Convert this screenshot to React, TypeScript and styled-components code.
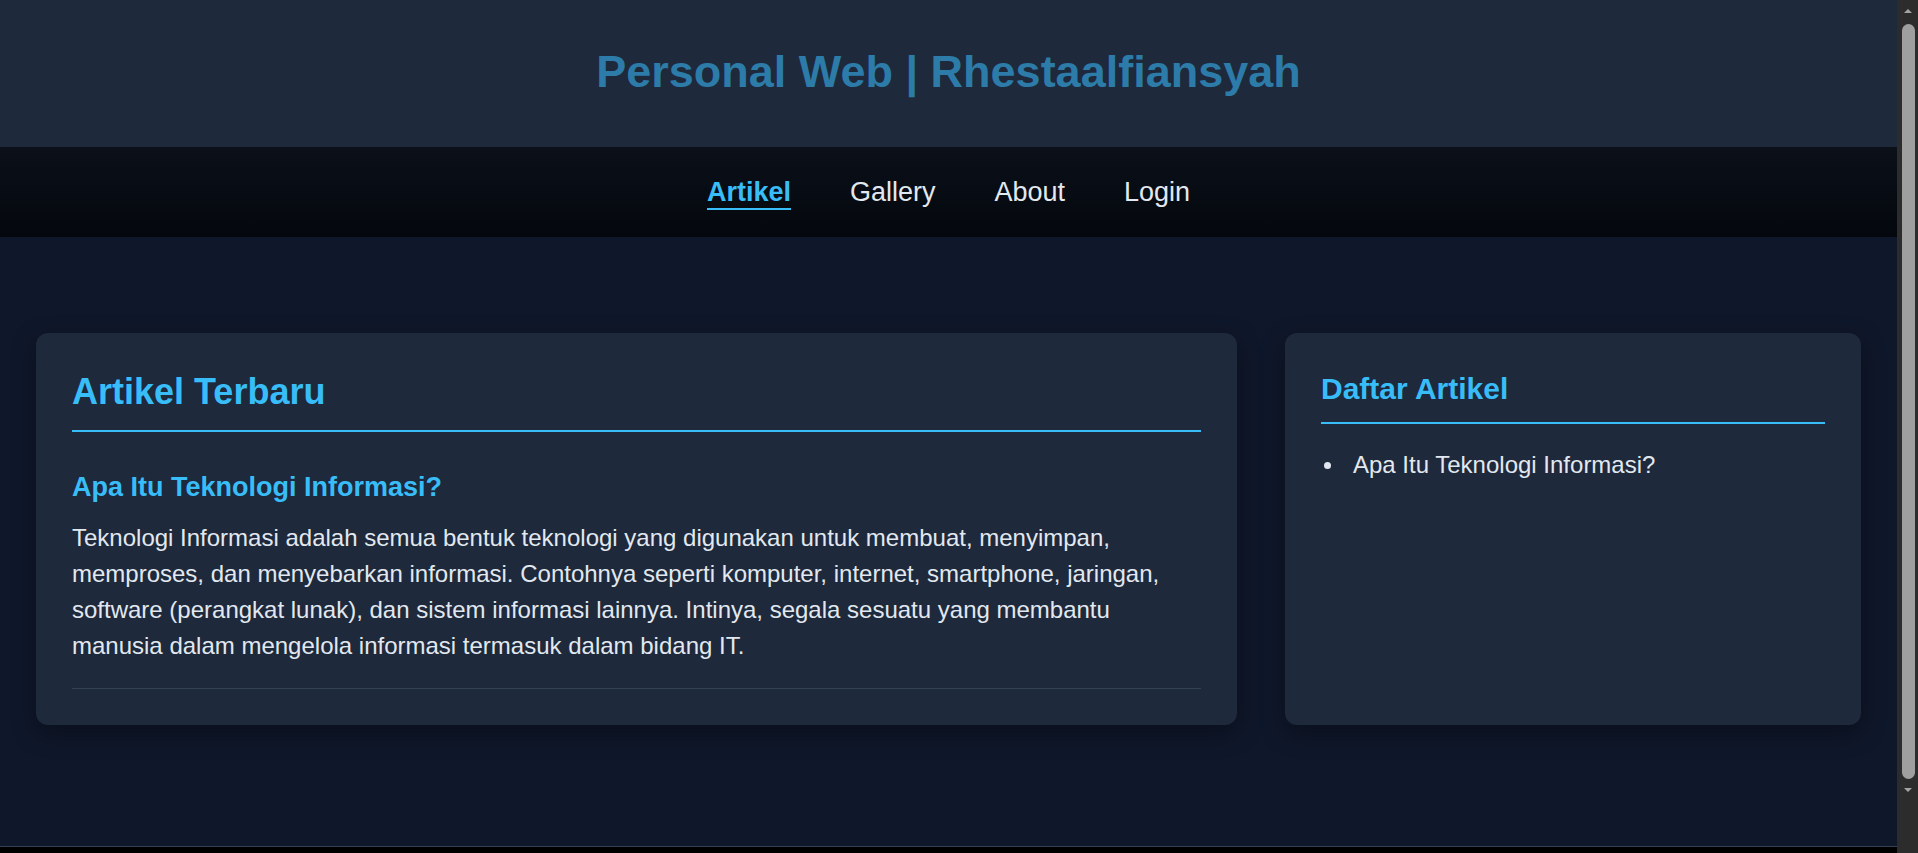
import React from "react";
import styled, { createGlobalStyle } from "styled-components";

const articles = [
  {
    id: 1,
    title: "Apa Itu Teknologi Informasi?",
    body: "Teknologi Informasi adalah semua bentuk teknologi yang digunakan untuk membuat, menyimpan, memproses, dan menyebarkan informasi. Contohnya seperti komputer, internet, smartphone, jaringan, software (perangkat lunak), dan sistem informasi lainnya. Intinya, segala sesuatu yang membantu manusia dalam mengelola informasi termasuk dalam bidang IT.",
  },
];

const menu = ["Artikel", "Gallery", "About", "Login"];

const App: React.FC = () => {
  return (
    <>
      <GlobalStyle />
      <Header>
        <Title>Personal Web | Rhestaalfiansyah</Title>
      </Header>
      <Nav>
        {menu.map((item) => (
          <NavLink key={item} href="#" $active={item === "Artikel"}>
            {item}
          </NavLink>
        ))}
      </Nav>
      <Main>
        <Card>
          <CardTitle $size={36}>Artikel Terbaru</CardTitle>
          {articles.map((a) => (
            <Article key={a.id}>
              <ArticleTitle>{a.title}</ArticleTitle>
              <ArticleBody>{a.body}</ArticleBody>
            </Article>
          ))}
        </Card>
        <Card>
          <CardTitle $size={30}>Daftar Artikel</CardTitle>
          <List>
            {articles.map((a) => (
              <ListItem key={a.id}>{a.title}</ListItem>
            ))}
          </List>
        </Card>
      </Main>
      <Footer />

      {/* window scrollbar as it shows in the screenshot */}
      <ScrollTrack>
        <Arrow $dir="up" />
        <Thumb />
        <Arrow $dir="down" />
      </ScrollTrack>
    </>
  );
};

export default App;

const GlobalStyle = createGlobalStyle`
  html {
    scrollbar-width: none;
  }
  body {
    margin: 0 21px 0 0;
    background: #0f172a;
    font-family: "Liberation Sans", Arial, sans-serif;
  }
`;

const Header = styled.header`
  height: 147px;
  background: #1e293b;
  display: flex;
  align-items: center;
  justify-content: center;
  box-sizing: border-box;
  padding-bottom: 4px;
`;

const Title = styled.h1`
  margin: 0;
  font-size: 45px;
  font-weight: 700;
  color: #2c7ba9;
`;

const Nav = styled.nav`
  height: 90px;
  background: linear-gradient(#0b1019, #04070d);
  display: flex;
  align-items: center;
  justify-content: center;
  gap: 59px;
`;

const NavLink = styled.a<{ $active?: boolean }>`
  font-size: 27px;
  text-decoration: none;
  color: ${(p) => (p.$active ? "#38bdf8" : "#e2e8f0")};
  font-weight: ${(p) => (p.$active ? 700 : 400)};
  border-bottom: 2px solid ${(p) => (p.$active ? "#38bdf8" : "transparent")};
  margin-top: 2px;
`;

const Main = styled.main`
  display: grid;
  grid-template-columns: 2.085fr 1fr;
  gap: 48px;
  padding: 96px 36px 121px;
`;

const Card = styled.section`
  background: #1e293b;
  border-radius: 12px;
  padding: 36px;
  box-shadow: 0 8px 24px rgba(0, 0, 0, 0.35);
  min-width: 0;
`;

const CardTitle = styled.h2<{ $size: number }>`
  margin: 0;
  font-size: ${(p) => p.$size}px;
  line-height: 1.3;
  font-weight: 700;
  color: #38bdf8;
  padding-bottom: 14px;
  border-bottom: 2px solid #38bdf8;
`;

const Article = styled.article`
  margin-top: 38px;
  padding-bottom: 24px;
  border-bottom: 1px solid #334155;
`;

const ArticleTitle = styled.h3`
  margin: 0 0 15px;
  font-size: 27px;
  line-height: 1.3;
  font-weight: 700;
  color: #38bdf8;
`;

const ArticleBody = styled.p`
  margin: 0;
  font-size: 24px;
  line-height: 1.5;
  color: #e2e8f0;
`;

const List = styled.ul`
  margin: 23px 0 0;
  padding: 0;
  list-style: none;
  font-size: 24px;
  line-height: 1.5;
  color: #e2e8f0;
`;

const ListItem = styled.li`
  display: flex;
  align-items: center;
  gap: 22px;
  padding-left: 3px;

  &::before {
    content: "";
    width: 7px;
    height: 7px;
    border-radius: 50%;
    background: #e2e8f0;
    flex-shrink: 0;
  }
`;

const Footer = styled.footer`
  background: #000;
  border-top: 1px solid #334155;
  height: 70px;
`;

const ScrollTrack = styled.div`
  position: fixed;
  top: 0;
  right: 0;
  width: 21px;
  height: 100vh;
  background: #2c2c2c;
  display: flex;
  flex-direction: column;
  align-items: center;
`;

const Arrow = styled.div<{ $dir: "up" | "down" }>`
  flex: 0 0 21px;
  display: flex;
  align-items: center;
  justify-content: center;

  &::before {
    content: "";
    border-left: 4px solid transparent;
    border-right: 4px solid transparent;
    ${(p) =>
      p.$dir === "up"
        ? "border-bottom: 4px solid #a3a3a3;"
        : "border-top: 4px solid #a3a3a3;"}
  }
`;

const Thumb = styled.div`
  width: 13px;
  margin: 3px 0 0 2px;
  height: 755px;
  border-radius: 7px;
  background: #9f9f9f;
`;
